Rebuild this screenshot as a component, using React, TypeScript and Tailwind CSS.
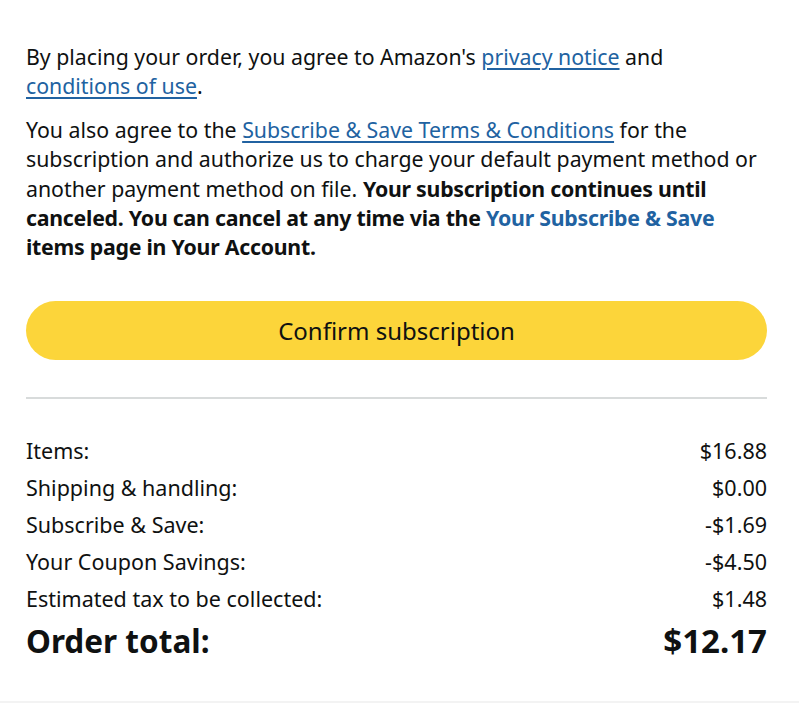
import React from "react";

const rows: [string, string][] = [
  ["Items:", "$16.88"],
  ["Shipping & handling:", "$0.00"],
  ["Subscribe & Save:", "-$1.69"],
  ["Your Coupon Savings:", "-$4.50"],
  ["Estimated tax to be collected:", "$1.48"],
];

export default function App() {
  return (
    <div
      className="w-[799px] h-[703px] bg-white text-[#0f1111] flex flex-col"
      style={{ fontFamily: '"Noto Sans", "Open Sans", Arial, sans-serif' }}
    >
      <div className="pl-[26px] pr-[32px] pt-[42px] flex-1">
        <p className="text-[21.3px] leading-[29px]">
          By placing your order, you agree to Amazon's{" "}
          <a className="text-[#2162a1] underline underline-offset-[3px]">privacy notice</a> and{" "}
          <a className="text-[#2162a1] underline underline-offset-[3px]">conditions of use</a>.
        </p>
        <p className="text-[21.3px] leading-[29.3px] mt-[15px]">
          You also agree to the{" "}
          <a className="text-[#2162a1] underline underline-offset-[3px]">
            Subscribe &amp; Save Terms &amp; Conditions
          </a>{" "}
          for the subscription and authorize us to charge your default payment method or another payment method on
          file.{" "}
          <b className="font-bold tracking-[-0.25px]">
            Your subscription continues until canceled. You can cancel at any time via the{" "}
            <span className="text-[#2162a1]">Your Subscribe &amp; Save</span> items page in Your Account.
          </b>
        </p>
        <button className="mt-[40px] w-full h-[59px] rounded-full bg-[#fcd53a] text-[24px] text-[#0f1111] flex items-center justify-center">
          Confirm subscription
        </button>
        <div className="mt-[37px] h-[2px] bg-[#d8dbdb]" />
        <div className="mt-[33px] flex flex-col">
          {rows.map(([l, v]) => (
            <div key={l} className="flex justify-between text-[21.5px] leading-[37px]">
              <span>{l}</span>
              <span>{v}</span>
            </div>
          ))}
          <div className="flex justify-between items-center font-bold mt-[2px] leading-[44px]">
            <span className="text-[31.5px]">Order total:</span>
            <span className="text-[33px]">$12.17</span>
          </div>
        </div>
      </div>
      <div className="h-[2px] bg-[#f3f3f3]" />
    </div>
  );
}
